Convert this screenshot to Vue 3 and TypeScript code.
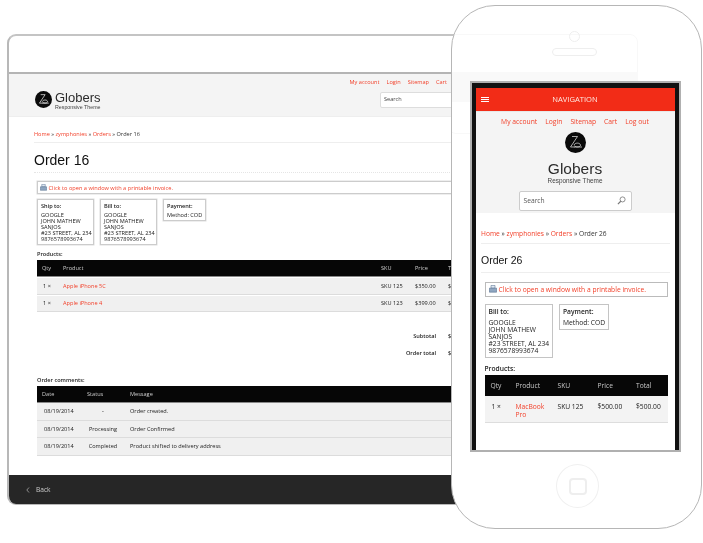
<script setup lang="ts">
interface Address { title: string; lines: string[] }
const addr = ['GOOGLE', 'JOHN MATHEW', 'SANJOS', '#23 STREET, AL 234', '9876578993674']
const boxes: Address[] = [
  { title: 'Ship to:', lines: addr },
  { title: 'Bill to:', lines: addr },
  { title: 'Payment:', lines: ['Method: COD'] },
]
const products = [
  { name: 'Apple iPhone 5C', sku: 'SKU 125', price: '$350.00' },
  { name: 'Apple iPhone 4', sku: 'SKU 123', price: '$399.00' },
]
const comments = [
  { date: '08/19/2014', status: '-', msg: 'Order created.' },
  { date: '08/19/2014', status: 'Processing', msg: 'Order Confirmed' },
  { date: '08/19/2014', status: 'Completed', msg: 'Product shifted to delivery address' },
]
const topLinks = ['My account', 'Login', 'Sitemap', 'Cart']
const phoneLinks = ['My account', 'Login', 'Sitemap', 'Cart', 'Log out']
</script>

<template>
  <div class="stage">
    <section class="window">
      <div class="chrome"></div>
      <header class="d-head">
        <div class="d-brand">
          <svg class="d-logo" viewBox="0 0 21 21">
            <circle cx="10.5" cy="10.5" r="10.5" fill="#0a0a0a" />
            <path d="M7 4.500h5.500L5.500 15H10M9 13c1-2.500 6-2.500 6.500 0 .4 2.200-5.500 2.700-6 .5M9.500 15H17" fill="none" stroke="#eee" stroke-width=".9" />
          </svg>
          <div>
            <div class="d-name">Globers</div>
            <div class="d-tag">Responsive Theme</div>
          </div>
        </div>
        <div class="d-side">
          <nav class="d-links"><a v-for="l in topLinks" :key="l">{{ l }}</a></nav>
          <div class="d-search">Search</div>
        </div>
      </header>
      <main class="d-main">
        <div class="d-crumb"><a>Home</a> » <a>zymphonies</a> » <a>Orders</a> » Order 16</div>
        <h1 class="d-title">Order 16</h1>
        <div class="d-invoice">
          <svg class="d-print" viewBox="0 0 10 10">
            <path d="M2.500 .5h5v3.500h-5z" fill="#dfe8f2" stroke="#56708f" stroke-width=".7" />
            <path d="M.5 4h9v5h-9z" fill="#8fa6c0" stroke="#4f6a8a" stroke-width=".7" />
          </svg>
          <a>Click to open a window with a printable invoice.</a>
        </div>
        <div class="d-boxes">
          <div v-for="b in boxes" :key="b.title" class="d-box">
            <strong>{{ b.title }}</strong>
            <p class="d-lines"><template v-for="(l, i) in b.lines" :key="i">{{ l }}<br /></template></p>
          </div>
        </div>
        <div class="d-label d-products">Products:</div>
        <div class="d-row d-th">
          <span class="c-qty">Qty</span><span class="c-prod">Product</span><span class="c-sku">SKU</span><span class="c-price">Price</span><span>Total</span>
        </div>
        <div v-for="p in products" :key="p.name" class="d-row d-td">
          <span class="c-qty q">1 ×</span><a class="c-prod">{{ p.name }}</a><span class="c-sku">{{ p.sku }}</span><span class="c-price">{{ p.price }}</span><span>{{ p.price }}</span>
        </div>
        <div class="d-total first"><span>Subtotal</span><span>$749.00</span></div>
        <div class="d-total"><span>Order total</span><span>$749.00</span></div>
        <div class="d-label d-comments">Order comments:</div>
        <div class="d-row d-th">
          <span class="c-date">Date</span><span class="c-status th">Status</span><span>Message</span>
        </div>
        <div v-for="(c, i) in comments" :key="i" class="d-row d-cm">
          <span class="c-date in">{{ c.date }}</span><span class="c-status">{{ c.status }}</span><span>{{ c.msg }}</span>
        </div>
      </main>
      <footer class="d-foot">
        <svg class="chev" viewBox="0 0 4 6"><path d="M3 .5.8 3 3 5.500" fill="none" stroke="#bbb" stroke-width=".7" /></svg>
        <span>Back</span>
      </footer>
    </section>

    <section class="phone">
      <div class="ghost"></div>
      <div class="ghost-band"></div>
      <div class="cam"></div>
      <div class="speaker"></div>
      <div class="screen">
        <div class="p-nav">
          <span class="burger"><i></i><i></i><i></i></span>
          <span>NAVIGATION</span>
        </div>
        <header class="p-head">
          <nav class="p-links"><a v-for="l in phoneLinks" :key="l">{{ l }}</a></nav>
          <svg class="p-logo" viewBox="0 0 21 21">
            <circle cx="10.5" cy="10.5" r="10.5" fill="#0a0a0a" />
            <path d="M7 4.500h5.500L5.500 15H10M9 13c1-2.500 6-2.500 6.500 0 .4 2.200-5.500 2.700-6 .5M9.500 15H17" fill="none" stroke="#eee" stroke-width=".7" />
          </svg>
          <div class="p-name">Globers</div>
          <div class="p-tag">Responsive Theme</div>
          <div class="p-search">
            <span>Search</span>
            <svg viewBox="0 0 10 10"><circle cx="6.200" cy="3.800" r="2.800" fill="none" stroke="#777" stroke-width=".9" /><path d="M4.200 5.800 1 9" stroke="#777" stroke-width="1.300" /></svg>
          </div>
        </header>
        <main class="p-main">
          <div class="p-crumb"><a>Home</a> » <a>zymphonies</a> » <a>Orders</a> » Order 26</div>
          <h1 class="p-title">Order 26</h1>
          <div class="p-invoice">
            <svg class="p-print" viewBox="0 0 10 10">
              <path d="M2.500 .5h5v3.500h-5z" fill="#dfe8f2" stroke="#56708f" stroke-width=".7" />
              <path d="M.5 4h9v5h-9z" fill="#8fa6c0" stroke="#4f6a8a" stroke-width=".7" />
            </svg>
            <a>Click to open a window with a printable invoice.</a>
          </div>
          <div class="p-boxes">
            <div v-for="b in boxes.slice(1)" :key="b.title" class="p-box">
              <strong>{{ b.title }}</strong>
              <p class="p-lines"><template v-for="(l, i) in b.lines" :key="i">{{ l }}<br /></template></p>
            </div>
          </div>
          <div class="p-label">Products:</div>
          <div class="p-row p-th">
            <span class="pc-qty">Qty</span><span class="pc-prod">Product</span><span class="pc-sku">SKU</span><span class="pc-price">Price</span><span>Total</span>
          </div>
          <div class="p-row p-td">
            <span class="pc-qty q">1 ×</span><a class="pc-prod">MacBook Pro</a><span class="pc-sku">SKU 125</span><span class="pc-price">$500.00</span><span>$500.00</span>
          </div>
        </main>
      </div>
      <div class="home"><div class="home-sq"></div></div>
    </section>
  </div>
</template>

<style>
html, body { margin: 0; background: #fff; }
</style>

<style scoped>
.stage { position: relative; width: 703px; height: 543px; overflow: hidden; background: #fff; font-family: "Open Sans", sans-serif; color: #222; }
a { color: #f2402a; }
strong { font-weight: 600; color: #222; }

/* desktop window */
.window { position: absolute; left: 7px; top: 34px; width: 632px; height: 471px; box-sizing: border-box; border: 2px solid #b8b8b8; border-top-color: #c4c4c4; border-bottom-width: 1px; border-radius: 9px; background: #fff; overflow: hidden; display: flex; flex-direction: column; filter: blur(.3px); }
.chrome { height: 36px; border-bottom: 2px solid #b4b4b4; flex: none; }
.d-head { height: 43px; flex: none; background: #f4f4f4; border-bottom: 1px solid #eee; display: flex; justify-content: space-between; box-sizing: border-box; padding-left: 26px; }
.d-brand { display: flex; align-items: flex-start; gap: 3px; padding-top: 17px; }
.d-logo { width: 17px; height: 17px; }
.d-name { font: 13px/13px "Liberation Sans", sans-serif; color: #2b2b2b; }
.d-tag { font: 5.300px/6px "Liberation Sans", sans-serif; color: #444; }
.d-side { width: 257px; }
.d-links { display: flex; gap: 7px; font-size: 5.600px; line-height: 8px; margin: 4px 0 0 -30.500px; }
.d-search { margin-top: 6px; height: 16px; box-sizing: border-box; border: 1.500px solid #ddd; border-radius: 2px; background: #fff; font-size: 5.600px; line-height: 13px; padding-left: 3px; color: #444; }
.d-main { flex: 1; padding: 0 28px; min-height: 0; }
.d-crumb { font-size: 5.600px; line-height: 9px; margin: 13px -1px 0 -3px; padding-bottom: 3px; border-bottom: 1px solid #eee; color: #333; }
.d-title { font: 400 14px/16px "Liberation Sans", sans-serif; color: #111; margin: 9px -1px 0 -3px; padding-bottom: 4px; border-bottom: 1px dotted #e5e5e5; }
.d-invoice { margin: 8px 0 0 -.5px; height: 13px; box-sizing: border-box; border: 1px solid #ccc; box-shadow: 0 0 0 .5px #ddd; display: flex; align-items: center; padding-left: 2.500px; gap: 1.500px; font-size: 5.650px; white-space: nowrap; }
.d-print { width: 7px; height: 7px; }
.d-boxes { display: flex; gap: 6px; align-items: flex-start; margin-top: 5px; }
.d-box { border: 1px solid #ccc; box-shadow: 0 0 0 .5px #ddd; padding: 3px 3px 2px; font-size: 5.600px; line-height: 6px; white-space: nowrap; }
.d-box:nth-child(-n+2) { width: 49px; }
.d-box strong { display: block; height: 7px; }
.d-lines { margin: 2px 0 0; }
.d-label { font-size: 5.600px; font-weight: 600; color: #222; line-height: 8px; }
.d-products { margin-top: 5px; }
.d-comments { margin-top: 19px; }
.d-row { display: flex; align-items: center; padding-left: 5px; font-size: 5.600px; white-space: nowrap; box-sizing: border-box; }
.d-th { height: 17px; margin-top: 2px; background: #060606; color: #ccc; border-bottom: 1px solid #888; }
.d-td { height: 16.500px; margin-top: 1px; background: #f0f0f0; border-bottom: 1px solid #dcdcdc; color: #222; }
.d-cm { height: 17.600px; background: #f0f0f0; border-bottom: 1px solid #dcdcdc; color: #222; }
.c-qty { width: 21px; flex: none; box-sizing: border-box; }
.c-qty.q { padding-left: 1px; }
.c-prod { width: 318px; flex: none; }
.c-sku { width: 34px; flex: none; }
.c-price { width: 33px; flex: none; }
.c-date { width: 45px; flex: none; box-sizing: border-box; }
.c-date.in { padding-left: 2px; }
.c-status { width: 32px; flex: none; text-align: center; margin-right: 11px; }
.c-status.th { text-align: left; }
.d-total { display: flex; font-size: 5.600px; font-weight: 600; color: #222; line-height: 8px; margin-top: 9px; }
.d-total.first { margin-top: 20px; }
.d-total span:first-child { width: 399px; text-align: right; margin-right: 12px; }
.d-foot { height: 29px; flex: none; background: #262626; color: #ccc; font-size: 6.600px; display: flex; align-items: center; padding-left: 17px; gap: 6px; }
.chev { width: 4px; height: 6px; }

/* phone */
.phone { position: absolute; left: 451px; top: 5px; width: 251px; height: 524px; box-sizing: border-box; border: 1.500px solid #b6b6b6; border-radius: 44px; background: #fff; overflow: hidden; }
.ghost { position: absolute; left: -4px; top: 28px; width: 190px; height: 100px; border: 1px solid #f8f8f8; border-radius: 8px; box-sizing: border-box; }
.ghost-band { position: absolute; left: 0; top: 66px; width: 186px; height: 30px; background: #f9f9f9; }
.cam { position: absolute; left: 117px; top: 25px; width: 11px; height: 11px; box-sizing: border-box; border: 1.500px solid #eee; border-radius: 50%; }
.speaker { position: absolute; left: 100px; top: 42px; width: 45px; height: 8px; box-sizing: border-box; border: 1.500px solid #eee; border-radius: 4px; }
.home { position: absolute; left: 104px; top: 458px; width: 43px; height: 44px; box-sizing: border-box; border: 1.500px solid #f0f0f0; border-radius: 50%; display: flex; align-items: center; justify-content: center; }
.home-sq { width: 18px; height: 17px; box-sizing: border-box; border: 2px solid #eee; border-radius: 4px; }
.screen { position: absolute; left: 17.500px; top: 74.500px; width: 211px; height: 371px; box-sizing: border-box; border: 2px solid #b0b0b0; background: #fff; overflow: hidden; box-shadow: inset 4px 0 0 #111, inset -4px 0 0 #111, inset 0 5px 0 #111; padding: 5px 4px 0; filter: blur(.25px); }
.p-nav { height: 23px; background: #f22c17; color: #ffe9e2; font-size: 7.600px; display: flex; align-items: center; justify-content: center; position: relative; }
.burger { position: absolute; left: 5px; top: 9px; width: 8px; display: flex; flex-direction: column; gap: 1px; }
.burger i { display: block; height: 1px; background: #fff; }
.p-head { height: 102px; box-sizing: border-box; background: #f4f4f4; display: flex; flex-direction: column; align-items: center; border-top: 1px solid #e8e8e8; }
.p-links { display: flex; gap: 8px; font-size: 6.750px; line-height: 10px; margin-top: 5.500px; }
.p-logo { width: 21px; height: 21px; margin-top: 4.500px; }
.p-name { font: 15.500px/16px "Liberation Sans", sans-serif; color: #2b2b2b; margin-top: 8px; }
.p-tag { font: 6.400px/8px "Liberation Sans", sans-serif; color: #444; }
.p-search { width: 113px; height: 20px; box-sizing: border-box; border: 1.500px solid #ccc; border-radius: 2px; background: #fff; margin-top: 6px; display: flex; align-items: center; justify-content: space-between; padding: 0 5px 0 4px; font-size: 6.700px; color: #555; }
.p-search svg { width: 9px; height: 9px; }
.p-main { padding: 0 5px 0 5.500px; }
.p-crumb { font-size: 6.650px; line-height: 10px; margin-top: 16px; padding-bottom: 4px; border-bottom: 1px solid #eee; color: #333; }
.p-title { font: 400 10.500px/12px "Liberation Sans", sans-serif; color: #111; margin: 10px 0 0; padding-bottom: 6px; border-bottom: 1px solid #eee; }
.p-invoice { margin: 9px 2px 0 3.500px; height: 15px; box-sizing: border-box; border: 1px solid #bbb; display: flex; align-items: center; padding-left: 3px; gap: 2px; font-size: 6.700px; white-space: nowrap; }
.p-print { width: 8px; height: 8px; }
.p-boxes { display: flex; gap: 6.500px; align-items: flex-start; margin: 7px 0 0 3.500px; }
.p-box { border: 1px solid #c4c4c4; padding: 3px; font-size: 6.700px; line-height: 7.100px; white-space: nowrap; }
.p-box:first-child { width: 60px; }
.p-box strong { display: block; height: 8px; }
.p-lines { margin: 3px 0 0; }
.p-label { margin: 6px 0 0 3.500px; font-size: 6.700px; font-weight: 600; color: #222; line-height: 9px; }
.p-row { margin: 2px 2px 0 3.500px; display: flex; padding-left: 6px; font-size: 6.700px; white-space: nowrap; }
.p-th { height: 21px; align-items: center; background: #070707; color: #c8c8c8; }
.p-td { margin-top: 0; height: 27px; box-sizing: border-box; padding-top: 7.500px; line-height: 7.100px; background: #f3f3f3; border-bottom: 1px solid #ddd; color: #222; }
.pc-qty { width: 25px; flex: none; box-sizing: border-box; }
.pc-qty.q { padding-left: 1px; }
.pc-prod { width: 42px; flex: none; white-space: normal; padding-right: 10px; box-sizing: border-box; }
.pc-sku { width: 40px; flex: none; }
.pc-price { width: 38.500px; flex: none; }
</style>
